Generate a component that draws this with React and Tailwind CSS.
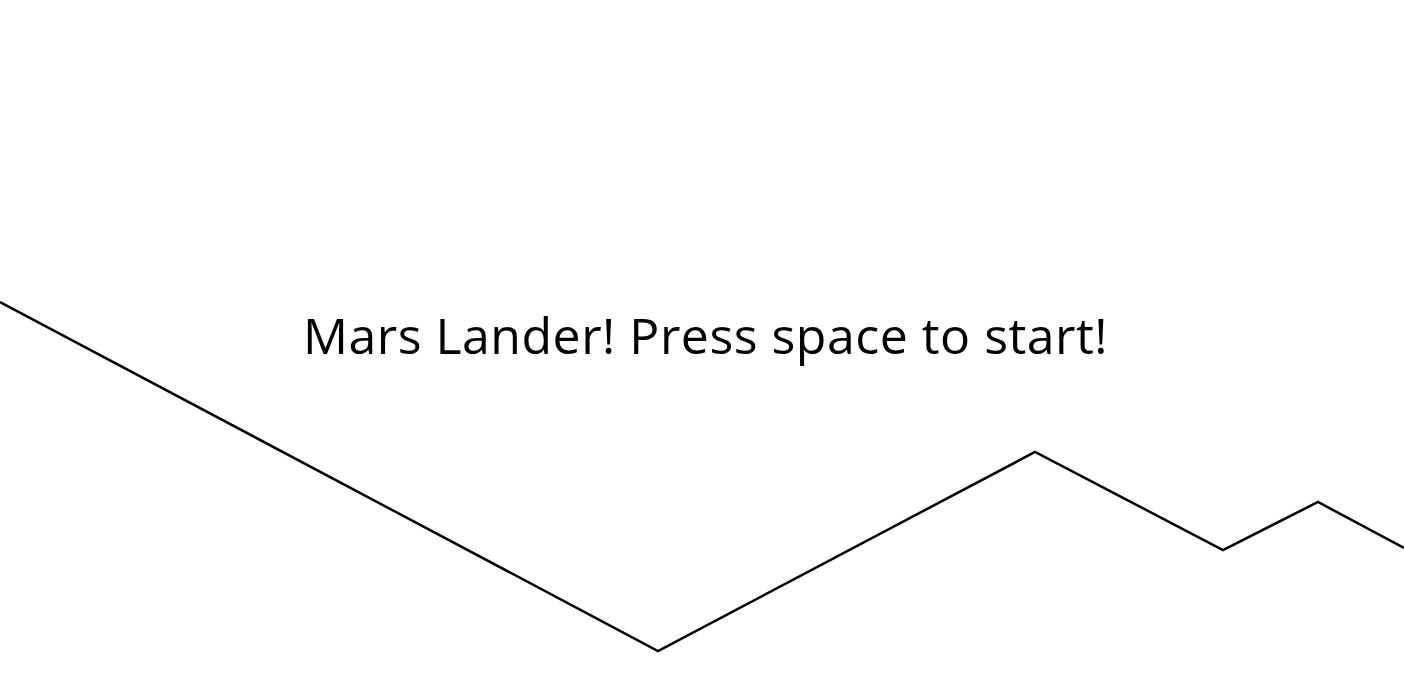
export default function App() {
  // terrain points taken from the game canvas
  const terrain = [
    [0, 302],
    [658, 651],
    [1035, 452],
    [1223, 550],
    [1318, 502],
    [1404, 548],
  ];

  return (
    <div className="relative w-[1404px] h-[698px] bg-white overflow-hidden">
      <svg className="absolute inset-0" width="1404" height="698" viewBox="0 0 1404 698">
        <polyline
          points={terrain.map((p) => p.join(',')).join(' ')}
          fill="none"
          stroke="#000"
          strokeWidth="2.5"
          strokeLinejoin="miter"
        />
      </svg>

      <div className="relative flex justify-center pt-[300px] pl-[7px]">
        <h1 className="text-[50px] leading-[70px] text-black font-['Open_Sans',sans-serif] tracking-[0.5px]">
          Mars Lander! Press space to start!
        </h1>
      </div>
    </div>
  );
}
